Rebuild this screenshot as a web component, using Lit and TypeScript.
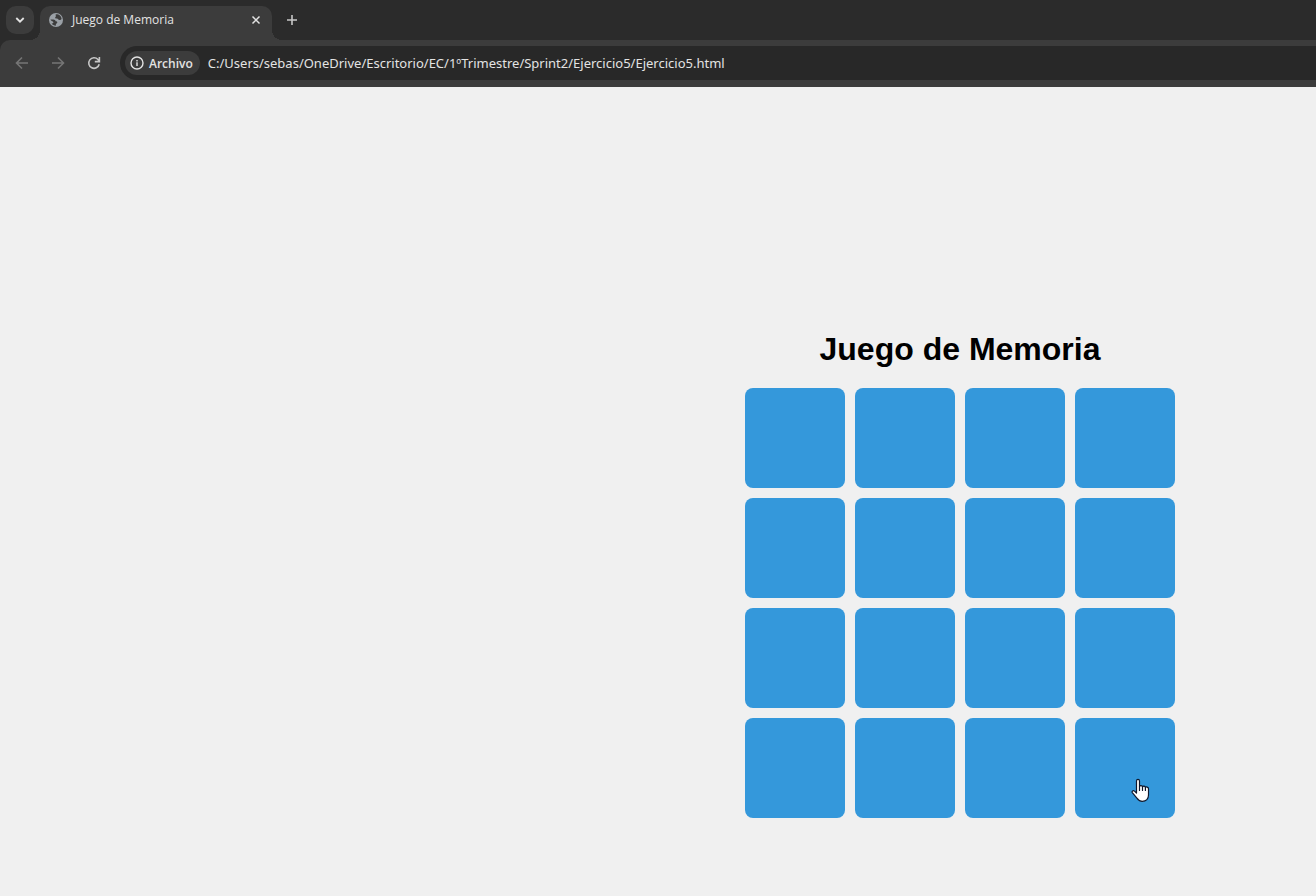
import { LitElement, html, css } from "lit";
import { customElement, state } from "lit/decorators.js";

@customElement("browser-bar")
class BrowserBar extends LitElement {
  static styles = css`
    :host {
      display: block;
      background: #2b2b2b;
      color: #e3e3e3;
      font-family: "Open Sans", "Noto Sans", sans-serif;
    }
    button {
      border: 0;
      padding: 0;
      background: none;
      color: inherit;
      font: inherit;
      display: flex;
      align-items: center;
      justify-content: center;
    }
    svg {
      display: block;
      flex: none;
    }
    .strip {
      display: flex;
      height: 34px;
      padding: 6px 6px 0;
    }
    .search {
      width: 28px;
      height: 28px;
      border-radius: 10px;
      background: #3c3c3c;
    }
    .tab {
      position: relative;
      display: flex;
      align-items: center;
      box-sizing: border-box;
      width: 232px;
      height: 34px;
      margin-left: 6px;
      padding: 0 8px 6px;
      border-radius: 10px 10px 0 0;
      background: #3c3c3c;
    }
    .tab::before,
    .tab::after {
      content: "";
      position: absolute;
      bottom: 0;
      width: 10px;
      height: 10px;
    }
    .tab::before {
      right: 100%;
      background: radial-gradient(circle at 0 0, transparent 10px, #3c3c3c 10px);
    }
    .tab::after {
      left: 100%;
      background: radial-gradient(circle at 100% 0, transparent 10px, #3c3c3c 10px);
    }
    .title {
      flex: 1;
      margin-left: 8px;
      font-size: 12px;
      line-height: 16px;
      white-space: nowrap;
    }
    .close {
      width: 16px;
      height: 16px;
    }
    .new {
      width: 28px;
      height: 28px;
      margin-left: 6px;
      color: #c7c7c7;
    }
    .toolbar {
      display: flex;
      align-items: center;
      box-sizing: border-box;
      height: 47px;
      border-radius: 10px 0 0 0;
      background: #3c3c3c;
      padding: 0 0 1px 4px;
    }
    .nav {
      width: 36px;
      height: 36px;
      color: #c7c7c7;
    }
    .nav:disabled {
      color: #757575;
    }
    .address {
      flex: 1;
      display: flex;
      align-items: center;
      height: 34px;
      margin-left: 8px;
      padding-left: 5px;
      border-radius: 17px 0 0 17px;
      background: #282828;
    }
    .chip {
      height: 24px;
      padding: 0 7px 0 5px;
      gap: 5px;
      border-radius: 12px;
      background: #3c3c3c;
      font-size: 12px;
      font-weight: 600;
    }
    .url {
      flex: 1;
      min-width: 0;
      margin-left: 8px;
      padding: 0;
      border: 0;
      outline: 0;
      background: none;
      color: #e3e3e3;
      font: 13px/20px "Noto Sans", "Open Sans", sans-serif;
    }
  `;

  render() {
    return html`
      <div class="strip">
        <button class="search" aria-label="Buscar pestañas">
          <svg width="10" height="8" viewBox="0 0 10 8" fill="none" stroke="currentColor" stroke-width="1.8"><path d="M1.3 2 5 5.7 8.7 2" /></svg>
        </button>
        <div class="tab">
          <svg width="16" height="16" viewBox="0 0 16 16">
            <circle cx="8" cy="8" r="7" fill="#9aa0a6" />
            <path fill="#3c3c3c" d="M7.700 2.400c2.700-.6 5.700 1.400 5.900 4.600-.6 1-1.700 1.200-2.800.8-.8-.3-.9-1.200-1.800-1.300-1-.1-1.700.1-1.800-.8-.1-1 .7-.8.8-1.600C8.100 3.400 7.200 3.200 7.700 2.400zM2.400 7.400h3c1.200 0 2.100.8 2.200 1.800.9.100 1.800.3 1.700 1.200-.1.900-1.300 1-1.400 1.800l-.1 1.500c-1.700-.1-3.200-.8-4.200-2.200.8-.2 1.700-.2 1.800-1.100.1-.9-1-1-1.700-1.500-.6-.4-1-.8-1.300-1.500z" />
          </svg>
          <span class="title">Juego de Memoria</span>
          <button class="close" aria-label="Cerrar">
            <svg width="16" height="16" viewBox="0 0 16 16" fill="none" stroke="currentColor" stroke-width="1.5"><path d="m4.500 4.500 7 7m0-7-7 7" /></svg>
          </button>
        </div>
        <button class="new" aria-label="Nueva pestaña">
          <svg width="12" height="12" viewBox="0 0 12 12" fill="none" stroke="currentColor" stroke-width="1.6"><path d="M6 1v10M1 6h10" /></svg>
        </button>
      </div>
      <div class="toolbar">
        <button class="nav" disabled aria-label="Atrás">
          <svg width="16" height="16" viewBox="0 0 16 16" fill="none" stroke="currentColor" stroke-width="1.6"><path d="M14 8H3M8 2.500 2.500 8 8 13.500" /></svg>
        </button>
        <button class="nav" disabled aria-label="Adelante">
          <svg width="16" height="16" viewBox="0 0 16 16" fill="none" stroke="currentColor" stroke-width="1.6"><path d="M2 8h11M8 2.500 13.500 8 8 13.500" /></svg>
        </button>
        <button class="nav" aria-label="Recargar">
          <svg width="16" height="16" viewBox="0 0 16 16" fill="none" stroke="currentColor" stroke-width="1.600"><path d="M13.200 9.300A5.300 5.300 0 1 1 12 4.500L13.200 6M13.400 2v4.600H8.800" /></svg>
        </button>
        <div class="address">
          <button class="chip">
            <svg width="14" height="14" viewBox="0 0 14 14" fill="none" stroke="currentColor" stroke-width="1.400"><circle cx="7" cy="7" r="6" /><path d="M7 6.300V10M7 4v1.400" /></svg>
            Archivo
          </button>
          <input
            class="url"
            aria-label="Dirección"
            spellcheck="false"
            value="C:/Users/sebas/OneDrive/Escritorio/EC/1ºTrimestre/Sprint2/Ejercicio5/Ejercicio5.html"
          />
        </div>
      </div>
    `;
  }
}

@customElement("app-root")
class AppRoot extends LitElement {
  static styles = css`
    :host {
      display: flex;
      flex-direction: column;
      min-height: 100vh;
      background: #f0f0f0;
      font-family: Arial, "Liberation Sans", sans-serif;
    }
    main {
      flex: 1;
      display: flex;
      flex-direction: column;
      align-items: center;
      padding: 244px 0 40px 604px;
    }
    h1 {
      margin: 0 0 20px;
      font-size: 32px;
      line-height: 37px;
      color: #000;
    }
    .board {
      display: grid;
      grid-template-columns: repeat(4, 100px);
      grid-auto-rows: 100px;
      gap: 10px;
    }
    .card {
      position: relative;
      border: 0;
      padding: 0;
      border-radius: 8px;
      background: #3498db;
      cursor: pointer;
    }
    .pointer {
      position: absolute;
      left: 56px;
      top: 60px;
    }
  `;

  @state() private cards = Array.from({ length: 16 }, (_, i) => i + 1);

  render() {
    const last = this.cards.length;
    return html`
      <browser-bar></browser-bar>
      <main>
        <h1>Juego de Memoria</h1>
        <div class="board">
          ${this.cards.map(
            (n) => html`<button class="card" aria-label="Carta ${n}">
              ${n === last
                ? html`<svg class="pointer" width="20" height="26" viewBox="0 0 20 26" aria-hidden="true">
                    <path
                      fill="#fff"
                      stroke="#10182c"
                      stroke-width="1.200"
                      stroke-linejoin="round"
                      d="M5.500 15V3c0-2.200 3-2.200 3 0v5.500c.4-1.400 2.900-1.200 3 .4.500-1.200 2.800-.9 2.900.6.600-1 3.100-.6 3.100 1.200V17c0 3.600-2.300 6.300-6.300 6.300-2.700 0-4-1.100-5.300-3.100L1.300 14.600c-.8-1.300 1-2.700 2.200-1.500z"
                    />
                    <path fill="none" stroke="#10182c" stroke-width="1.200" stroke-linecap="round" d="M8.500 8.500v4M11.500 9v3.500M14.400 9.500v3" />
                  </svg>`
                : ""}
            </button>`
          )}
        </div>
      </main>
    `;
  }
}
